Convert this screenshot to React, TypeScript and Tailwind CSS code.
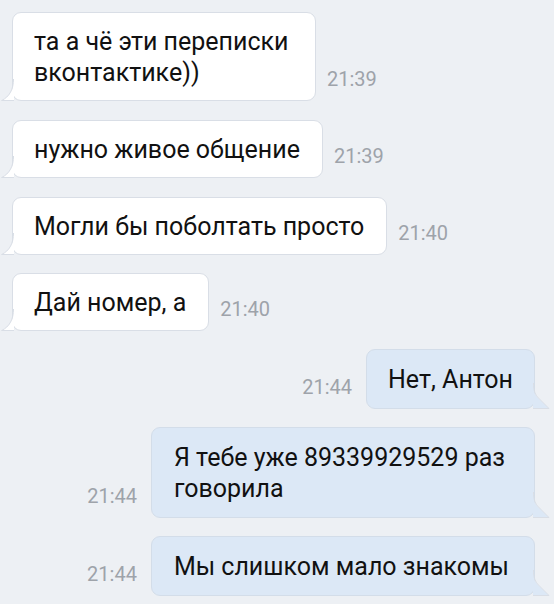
import React from "react";

const BORDER = "#d9dee6";

function LeftTail({ fill }: { fill: string }) {
  return (
    <svg
      className="absolute bottom-[-1px] left-[-12px]"
      width="14"
      height="22"
      viewBox="0 0 14 22"
    >
      <path d="M13 0 C13 10 9 18 0 21.5 L13 21.5 Z" fill={fill} />
      <path d="M12.5 0 C12.5 10 8.5 18 0.5 21.5 L13 21.5" fill="none" stroke={BORDER} strokeWidth="1" />
    </svg>
  );
}

function RightTail({ fill }: { fill: string }) {
  return (
    <svg
      className="absolute bottom-[-1px] right-[-16px]"
      width="18"
      height="26"
      viewBox="0 0 18 26"
    >
      <path d="M1 0 C1 8 3 12 6 15 L17 25.5 L1 25.5 Z" fill={fill} />
      <path d="M1.5 0 C1.5 8 3.5 12 6.5 15 L17 25.5 L1 25.5" fill="none" stroke={BORDER} strokeWidth="1" />
    </svg>
  );
}

function Left({
  children,
  time,
  className = "",
  width,
}: {
  children: React.ReactNode;
  time: string;
  className?: string;
  width?: string;
}) {
  return (
    <div className={`flex items-end pl-[12px] ${className}`}>
      <div
        className={`relative rounded-[9px] border border-[#d9dee6] bg-white pb-[12px] pt-[13px] pl-[21px] pr-[22px] text-[25px] leading-[31px] text-[#111] ${width ?? ""}`}
      >
        {children}
        <LeftTail fill="#ffffff" />
      </div>
      <div className="mb-[10px] ml-[11px] text-[20px] leading-[24px] text-[#9ea3aa]">{time}</div>
    </div>
  );
}

function Right({
  children,
  time,
  className = "",
  pad = "pl-[22px] pr-[25px]",
  width,
}: {
  children: React.ReactNode;
  time: string;
  className?: string;
  pad?: string;
  width?: string;
}) {
  return (
    <div className={`flex items-end justify-end pr-[19px] ${className}`}>
      <div className="mb-[10px] mr-[14px] text-[20px] leading-[24px] text-[#9ea3aa]">{time}</div>
      <div
        className={`relative rounded-[9px] border border-[#d3dde9] bg-[#dce8f6] pb-[13px] pt-[14px] ${pad} text-[25px] leading-[31px] text-[#111] ${width ?? ""}`}
      >
        {children}
        <RightTail fill="#dce8f6" />
      </div>
    </div>
  );
}

export default function App() {
  return (
    <div
      className="flex h-[604px] w-[554px] flex-col overflow-hidden bg-[#edf0f4] pt-[12px]"
      style={{ fontFamily: "Roboto, 'Noto Sans', sans-serif" }}
    >
      <Left time="21:39" width="w-[304px]">
        та а чё эти переписки
        <br />
        вконтактике))
      </Left>
      <Left time="21:39" className="mt-[19px]">
        нужно живое общение
      </Left>
      <Left time="21:40" className="mt-[19px]">
        Могли бы поболтать просто
      </Left>
      <Left time="21:40" className="mt-[18px]">
        Дай номер, а
      </Left>
      <Right time="21:44" className="mt-[18px]" pad="pl-[21px] pr-[21px]">
        Нет, Антон
      </Right>
      <Right time="21:44" className="mt-[18px]" width="w-[384px]">
        Я тебе уже 89339929529 раз
        <br />
        говорила
      </Right>
      <Right time="21:44" className="mt-[18px]">
        Мы слишком мало знакомы
      </Right>
    </div>
  );
}
